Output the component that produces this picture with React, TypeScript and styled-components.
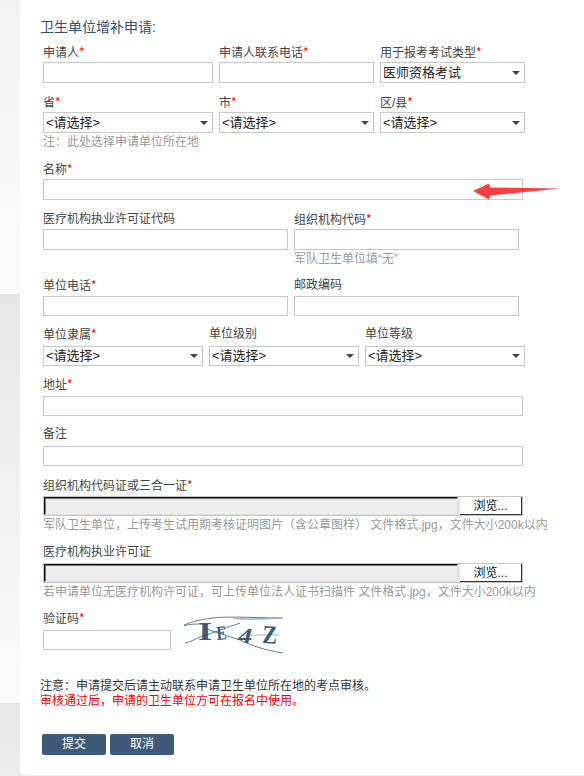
import React, { FC, ReactNode } from "react";
import styled, { createGlobalStyle } from "styled-components";

const GlobalStyle = createGlobalStyle`
  html, body {
    margin: 0;
    padding: 0;
    background: #f0f0f0;
  }
  body {
    font-family: "Liberation Sans", "Noto Sans CJK SC", sans-serif;
    font-size: 12px;
  }
`;

interface FieldProps {
  label: string;
  required?: boolean;
  width: number;
  labelGap?: number;
  children: ReactNode;
  note?: string;
}

const Field: FC<FieldProps> = ({ label, required, width, labelGap = 0, children, note }) => (
  <StyledField $width={width}>
    <StyledLabel $gap={labelGap}>
      {label}
      {required && <StyledStar>*</StyledStar>}
    </StyledLabel>
    {children}
    {note && <StyledNote>{note}</StyledNote>}
  </StyledField>
);

const Choice: FC<{ value?: string; height?: number }> = ({
  value = "<请选择>",
  height = 20,
}) => (
  <StyledSelectWrap>
    <StyledSelect defaultValue={value} $height={height}>
      <option>{value}</option>
    </StyledSelect>
  </StyledSelectWrap>
);

const FilePicker: FC = () => (
  <StyledFileBox>
    <StyledFilePath />
    <StyledBrowse type="button">浏览...</StyledBrowse>
  </StyledFileBox>
);

const Captcha: FC = () => (
  <StyledCaptcha viewBox="0 0 102 40" aria-label="验证码图片">
    <g fill="none" stroke="#3d5a78" strokeWidth="0.8">
      <path d="M1 10 C10 6 20 4 30 3 C45 1 80 3 100 3" />
      <path d="M50 3 C65 5 80 4 96 3" stroke="#9fb0c0" strokeWidth="1.6" />
      <path d="M1 11 C6 9 12 9 20 9" />
      <path d="M2 28 C8 27 12 24 17 22 C30 18 45 12 57 8" />
      <path d="M20 13 C32 17 45 21 57 25 C68 30 80 35 100 38" />
      <path d="M58 20 C70 21 85 19 96 20" stroke="#8ea2b5" />
    </g>
    <g fill="#3d5a78" fontFamily="'Liberation Serif', serif" fontWeight="bold">
      <text transform="translate(15 25) scale(1.4 1)" fontSize="26">I</text>
      <text transform="translate(34 25) rotate(-4) scale(0.75 1)" fontSize="20">E</text>
      <text transform="translate(55 28) scale(1.3 1)" fontSize="22" fontStyle="italic">4</text>
      <text transform="translate(79 28) rotate(3) scale(0.85 1)" fontSize="26">Z</text>
    </g>
  </StyledCaptcha>
);

const Arrow: FC = () => (
  <StyledArrow viewBox="0 0 88 18" aria-hidden="true">
    <path d="M0 8 L16 0.5 L17 4.5 L87 5.5 L17 12.5 L16 16.5 Z" fill="#ff3b3b" />
  </StyledArrow>
);

const App: FC = () => {
  return (
    <StyledPage>
      <GlobalStyle />
      <StyledRail>
        <StyledBand $height={294} $from="#f2f2f2" $to="#fbfbfb" />
        <StyledBand $height={409} $from="#e6e6e6" $to="#fbfbfb" />
        <StyledBand $height={73} $from="#e6e6e6" $to="#ececec" />
      </StyledRail>
      <StyledCard>
        <StyledTitle>卫生单位增补申请:</StyledTitle>

        <StyledRow $top={5} $gap={6}>
          <Field label="申请人" required width={170}>
            <StyledInput $height={21} />
          </Field>
          <Field label="申请人联系电话" required width={155}>
            <StyledInput $height={21} />
          </Field>
          <Field label="用于报考考试类型" required width={145}>
            <Choice value="医师资格考试" height={21} />
          </Field>
        </StyledRow>

        <StyledRow $top={9} $gap={6}>
          <Field label="省" required width={170} note={"注\uFF1A此处选择申请单位所在地"}>
            <Choice height={21} />
          </Field>
          <Field label="市" required width={155}>
            <Choice height={21} />
          </Field>
          <Field label="区/县" required width={145}>
            <Choice height={21} />
          </Field>
        </StyledRow>

        <StyledRow $top={8} $gap={0}>
          <StyledArrowAnchor>
            <Field label="名称" required width={480}>
              <StyledInput $height={21} />
            </Field>
            <Arrow />
          </StyledArrowAnchor>
        </StyledRow>

        <StyledRow $top={9} $gap={6}>
          <Field label="医疗机构执业许可证代码" width={245}>
            <StyledInput $height={21} />
          </Field>
          <Field label="组织机构代码" required width={225} note={"军队卫生单位填\u201C无\u201D"}>
            <StyledInput $height={21} />
          </Field>
        </StyledRow>

        <StyledRow $top={7} $gap={6}>
          <Field label="单位电话" required width={245} labelGap={1}>
            <StyledInput />
          </Field>
          <Field label="邮政编码" width={225} labelGap={1}>
            <StyledInput />
          </Field>
        </StyledRow>

        <StyledRow $top={8} $gap={6}>
          <Field label="单位隶属" required width={160} labelGap={2}>
            <Choice />
          </Field>
          <Field label="单位级别" width={150} labelGap={2}>
            <Choice />
          </Field>
          <Field label="单位等级" width={160} labelGap={2}>
            <Choice />
          </Field>
        </StyledRow>

        <StyledRow $top={8} $gap={0}>
          <Field label="地址" required width={480} labelGap={2}>
            <StyledInput />
          </Field>
        </StyledRow>

        <StyledRow $top={8} $gap={0}>
          <Field label="备注" width={480} labelGap={2}>
            <StyledInput />
          </Field>
        </StyledRow>

        <StyledRow $top={9} $gap={0}>
          <Field
            label="组织机构代码证或三合一证"
            required
            width={480}
            labelGap={1}
            note={"军队卫生单位\uFF0C上传考生试用期考核证明图片\uFF08含公章图样\uFF09 文件格式.jpg\uFF0C文件大小200k以内"}
          >
            <FilePicker />
          </Field>
        </StyledRow>

        <StyledRow $top={8} $gap={0}>
          <Field
            label="医疗机构执业许可证"
            width={480}
            labelGap={1}
            note={"若申请单位无医疗机构许可证\uFF0C可上传单位法人证书扫描件 文件格式.jpg\uFF0C文件大小200k以内"}
          >
            <FilePicker />
          </Field>
        </StyledRow>

        <StyledRow $top={7} $gap={12}>
          <Field label="验证码" required width={128} labelGap={2}>
            <StyledInput />
          </Field>
          <Captcha />
        </StyledRow>

        <StyledNotice>
          <div>{"注意\uFF1A申请提交后请主动联系申请卫生单位所在地的考点审核\u3002"}</div>
          <StyledWarning>{"审核通过后\uFF0C申请的卫生单位方可在报名中使用\u3002"}</StyledWarning>
        </StyledNotice>

        <StyledActions>
          <StyledButton type="button">提交</StyledButton>
          <StyledButton type="button">取消</StyledButton>
        </StyledActions>
      </StyledCard>
    </StyledPage>
  );
};

const StyledPage = styled.div`
  display: flex;
  width: 584px;
  height: 776px;
  overflow: hidden;
  background: #f0f0f0;
`;

const StyledRail = styled.div`
  display: flex;
  flex-direction: column;
  width: 20px;
  flex: none;
`;

const StyledBand = styled.div<{ $height: number; $from: string; $to: string }>`
  height: ${(p) => p.$height}px;
  background: linear-gradient(${(p) => p.$from}, ${(p) => p.$to});
`;

const StyledCard = styled.div`
  flex: 1;
  height: 775px;
  box-sizing: border-box;
  padding: 17px 0 0 23px;
  background: #fff;
  border-radius: 0 0 0 6px;
`;

const StyledTitle = styled.h3`
  margin: 0 0 0 -3px;
  font-size: 14px;
  font-weight: 400;
  line-height: 20px;
  color: #2f5070;
`;

const StyledRow = styled.div<{ $top: number; $gap: number }>`
  display: flex;
  align-items: flex-start;
  gap: ${(p) => p.$gap}px;
  margin-top: ${(p) => p.$top}px;
`;

const StyledField = styled.div<{ $width: number }>`
  display: flex;
  flex-direction: column;
  flex: none;
  width: ${(p) => p.$width}px;
`;

const StyledLabel = styled.label<{ $gap: number }>`
  line-height: 20px;
  height: 20px;
  margin-bottom: ${(p) => p.$gap}px;
  color: #444;
  white-space: nowrap;
`;

const StyledStar = styled.span`
  font-family: "Noto Sans CJK SC", sans-serif;
  color: #f00;
`;

const StyledNote = styled.div`
  margin-top: 1px;
  line-height: 17px;
  color: #999;
  white-space: nowrap;
`;

const StyledInput = styled.input.attrs({ type: "text" })<{ $height?: number }>`
  display: block;
  width: 100%;
  height: ${(p) => p.$height ?? 20}px;
  box-sizing: border-box;
  margin: 0;
  padding: 0 4px;
  background: #fff;
  border: 1px solid #c8c8c8;
  border-radius: 0;
  outline: none;
`;

const StyledSelectWrap = styled.div`
  position: relative;
  &::after {
    content: "";
    position: absolute;
    right: 5px;
    top: 50%;
    margin-top: -2px;
    border-style: solid;
    border-width: 4px 4px 0;
    border-color: #444 transparent transparent;
  }
`;

const StyledSelect = styled.select<{ $height: number }>`
  display: block;
  width: 100%;
  height: ${(p) => p.$height}px;
  box-sizing: border-box;
  margin: 0;
  padding: 0 0 0 2px;
  font-family: inherit;
  font-size: 13px;
  line-height: 18px;
  color: #222;
  background: #fff;
  border: 1px solid #c8c8c8;
  border-radius: 0;
  appearance: none;
  outline: none;
`;

const StyledFileBox = styled.div`
  display: flex;
  gap: 2px;
  height: 20px;
  box-sizing: border-box;
  background: #e4e4e4;
  border: 1px solid #c4c4c4;
`;

const StyledFilePath = styled.div`
  flex: 1;
  box-sizing: border-box;
  background: #eee;
  border-style: solid;
  border-width: 1px;
  border-color: #111 #e0e0e0 #e0e0e0 #111;
  box-shadow: inset 1px 1px 0 #777;
`;

const StyledBrowse = styled.button`
  width: 62px;
  flex: none;
  box-sizing: border-box;
  margin: 0;
  padding: 0;
  font-family: inherit;
  font-size: 12px;
  line-height: 16px;
  color: #111;
  background: #fff;
  border-style: solid;
  border-width: 0 1px 1px 0;
  border-color: #333;
`;

const StyledCaptcha = styled.svg`
  display: block;
  flex: none;
  width: 102px;
  height: 40px;
  margin-top: 7px;
`;

const StyledArrowAnchor = styled.div`
  position: relative;
`;

const StyledArrow = styled.svg`
  position: absolute;
  left: 430px;
  top: 24px;
  width: 88px;
  height: 18px;
`;

const StyledNotice = styled.div`
  margin: 24px 0 0 -3px;
  line-height: 15px;
  color: #333;
`;

const StyledWarning = styled.div`
  color: #f00;
`;

const StyledActions = styled.div`
  display: flex;
  gap: 4px;
  margin: 25px 0 0 -1px;
`;

const StyledButton = styled.button`
  width: 64px;
  height: 21px;
  margin: 0;
  padding: 0;
  font-family: inherit;
  font-size: 12px;
  line-height: 21px;
  color: #fff;
  background: #3d5a78;
  border: none;
  border-radius: 2px;
`;

export default App;
